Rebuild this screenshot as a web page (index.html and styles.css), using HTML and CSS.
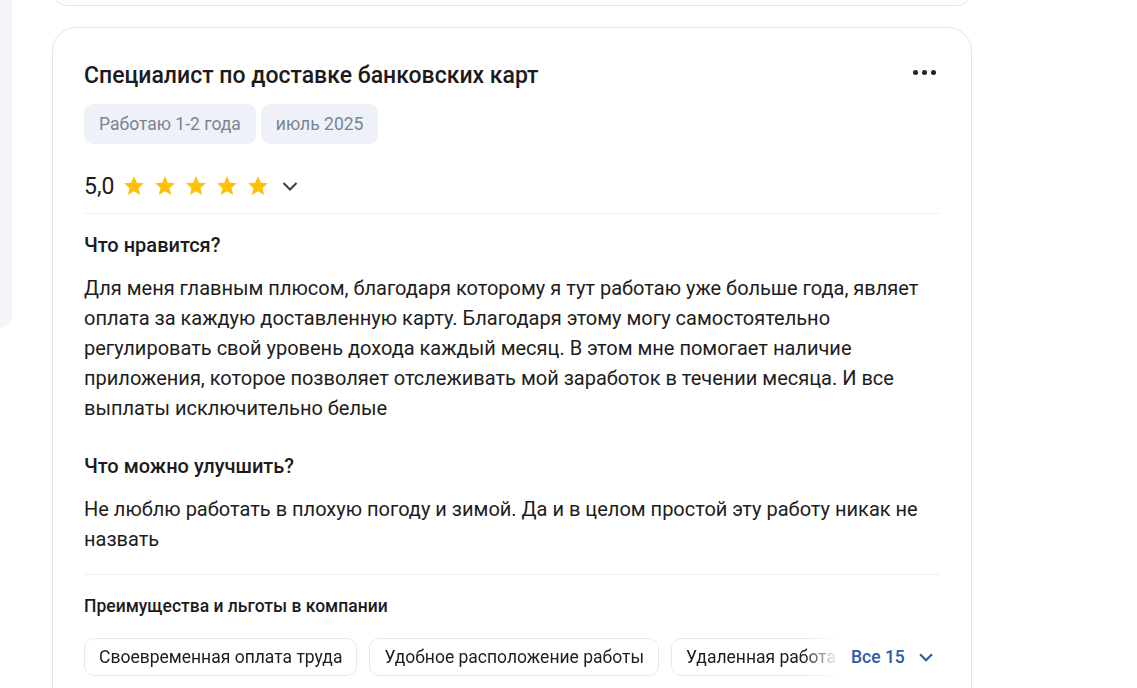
FILE: index.html
```html
<!DOCTYPE html>
<html lang="ru">
<head>
    <meta charset="UTF-8">
    <meta name="viewport" content="width=device-width, initial-scale=1.0">
    <title>Отзывы сотрудников</title>
    <link rel="stylesheet" href="styles.css">
</head>
<body>
    <div class="sidebar"></div>

    <div class="feed">
        <div class="card card-prev"></div>

        <div class="card">
            <div class="card-head">
                <h2 class="position">Специалист по доставке банковских карт</h2>
                <button class="more" aria-label="Ещё">
                    <span></span><span></span><span></span>
                </button>
            </div>

            <div class="tags">
                <span class="tag">Работаю 1-2 года</span>
                <span class="tag">июль 2025</span>
            </div>

            <div class="rating">
                <span class="score">5,0</span>
                <div class="stars">
                    <svg viewBox="0 0 24 24"><path d="M12 17.27L18.18 21l-1.64-7.03L22 9.24l-7.19-.61L12 2 9.19 8.63 2 9.24l5.46 4.73L5.82 21z"/></svg>
                    <svg viewBox="0 0 24 24"><path d="M12 17.27L18.18 21l-1.64-7.03L22 9.24l-7.19-.61L12 2 9.19 8.63 2 9.24l5.46 4.73L5.82 21z"/></svg>
                    <svg viewBox="0 0 24 24"><path d="M12 17.27L18.18 21l-1.64-7.03L22 9.24l-7.19-.61L12 2 9.19 8.63 2 9.24l5.46 4.73L5.82 21z"/></svg>
                    <svg viewBox="0 0 24 24"><path d="M12 17.27L18.18 21l-1.64-7.03L22 9.24l-7.19-.61L12 2 9.19 8.63 2 9.24l5.46 4.73L5.82 21z"/></svg>
                    <svg viewBox="0 0 24 24"><path d="M12 17.27L18.18 21l-1.64-7.03L22 9.24l-7.19-.61L12 2 9.19 8.63 2 9.24l5.46 4.73L5.82 21z"/></svg>
                </div>
                <svg class="chevron" viewBox="0 0 24 24"><path d="M5.5 9l6.5 6.5L18.5 9"/></svg>
            </div>

            <hr class="divider divider-top">

            <div class="section">
                <h3>Что нравится?</h3>
                <p>Для меня главным плюсом, благодаря которому я тут работаю уже больше года, являет оплата за каждую доставленную карту. Благодаря этому могу самостоятельно регулировать свой уровень дохода каждый месяц. В этом мне помогает наличие приложения, которое позволяет отслеживать мой заработок в течении месяца. И все выплаты исключительно белые</p>
            </div>

            <div class="section section-next">
                <h3>Что можно улучшить?</h3>
                <p>Не люблю работать в плохую погоду и зимой. Да и в целом простой эту работу никак не назвать</p>
            </div>

            <hr class="divider divider-bottom">

            <h4 class="benefits-title">Преимущества и льготы в компании</h4>

            <div class="benefits">
                <div class="chips">
                    <span class="chip">Своевременная оплата труда</span>
                    <span class="chip">Удобное расположение работы</span>
                    <span class="chip">Удаленная работа</span>
                </div>
                <button class="show-all">
                    Все 15
                    <svg viewBox="0 0 24 24"><path d="M5.5 9l6.5 6.5L18.5 9"/></svg>
                </button>
            </div>
        </div>
    </div>
</body>
</html>
```

FILE: styles.css
```css
body {
    margin: 0;
    display: flex;
    align-items: flex-start;
    font-family: Roboto, "Liberation Sans", Arial, sans-serif;
    color: #1d1d20;
    background: #fff;
    overflow: hidden;
    height: 688px;
}
.sidebar {
    width: 12px;
    height: 328px;
    background: #f4f5fa;
    border-bottom-right-radius: 18px;
    flex-shrink: 0;
}
.feed {
    margin-left: 40px;
    width: 920px;
    flex-shrink: 0;
}
.card {
    background: #fff;
    border: 1px solid #e1e5ec;
    border-radius: 24px;
    padding: 34px 31px 40px;
}
.card-prev {
    padding: 0;
    margin-top: -24px;
    height: 30px;
    box-sizing: border-box;
    margin-bottom: 21px;
}
.card-head {
    display: flex;
    justify-content: space-between;
    align-items: flex-start;
}
.position {
    margin: 0;
    font-size: 23px;
    line-height: 28px;
    font-weight: 500;
    color: #1b1b1d;
}
.more {
    display: flex;
    gap: 4px;
    background: none;
    border: none;
    padding: 0;
    margin: 8px 4px 0 0;
    cursor: pointer;
}
.more span {
    width: 5px;
    height: 5px;
    border-radius: 50%;
    background: #1f2430;
}
.tags {
    display: flex;
    gap: 5px;
    margin-top: 14px;
}
.tag {
    background: #eef1f7;
    color: #7b8391;
    font-size: 17.5px;
    line-height: 24px;
    padding: 8px 15px;
    border-radius: 9px;
}
.rating {
    display: flex;
    align-items: center;
    height: 32px;
    margin-top: 26px;
}
.score {
    font-size: 23px;
    color: #1b1b1d;
}
.stars {
    display: flex;
    gap: 7px;
    margin-left: 8px;
}
.stars svg {
    width: 24px;
    height: 24px;
    fill: #ffc107;
}
.chevron {
    width: 24px;
    height: 24px;
    margin-left: 8px;
    fill: none;
    stroke: #3a3d44;
    stroke-width: 2;
}
.divider {
    border: none;
    height: 1px;
    background: #eef0f5;
    margin: 0;
}
.divider-top {
    margin-top: 11px;
}
.section h3 {
    margin: 19px 0 0;
    font-size: 20px;
    line-height: 24px;
    font-weight: 500;
    color: #1b1b1d;
}
.section p {
    margin: 16px 0 0;
    font-size: 20px;
    line-height: 30px;
}
.section-next h3 {
    margin-top: 31px;
}
.divider-bottom {
    margin-top: 20px;
}
.benefits-title {
    margin: 20px 0 0;
    font-size: 17.5px;
    line-height: 22px;
    font-weight: 500;
    color: #1b1b1d;
}
.benefits {
    display: flex;
    align-items: center;
    margin-top: 21px;
}
.chips {
    display: flex;
    gap: 12px;
    width: 754px;
    overflow: hidden;
    -webkit-mask-image: linear-gradient(to right, #000 720px, transparent 754px);
    mask-image: linear-gradient(to right, #000 720px, transparent 754px);
}
.chip {
    flex-shrink: 0;
    border: 1px solid #e6e9f0;
    border-radius: 10px;
    padding: 0 14px;
    font-size: 17.5px;
    line-height: 36px;
    white-space: nowrap;
}
.show-all {
    display: flex;
    align-items: center;
    gap: 10px;
    margin-left: 13px;
    background: none;
    border: none;
    padding: 0;
    font-family: inherit;
    font-size: 17.5px;
    font-weight: 500;
    color: #2d5ca6;
    cursor: pointer;
}
.show-all svg {
    width: 22px;
    height: 22px;
    fill: none;
    stroke: #2d5ca6;
    stroke-width: 2.4;
}
```
